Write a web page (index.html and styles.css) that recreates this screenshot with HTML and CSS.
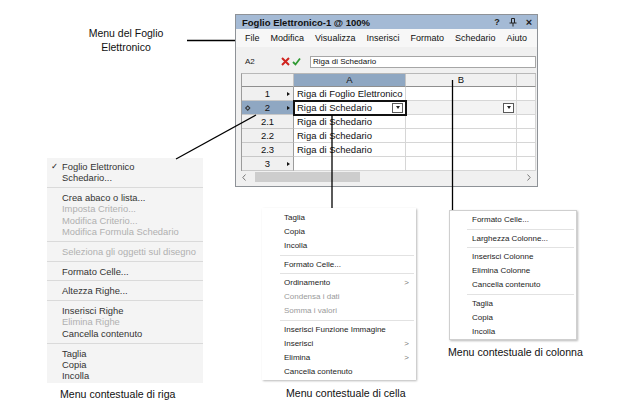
FILE: index.html
```html
<!DOCTYPE html>
<html lang="it">
<head>
<meta charset="utf-8">
<title>Foglio Elettronico</title>
<link rel="stylesheet" href="styles.css">
</head>
<body>
<div class="canvas">

  <div class="caption cap-top">Menu del Foglio<br>Elettronico</div>

  <div class="window">
    <div class="titlebar">
      <span class="title">Foglio Elettronico-1 @ 100%</span>
      <span class="tb-icons">
        <span class="tb-q">?</span>
        <svg class="tb-pin" width="8" height="9" viewBox="0 0 8 9"><path d="M2.5 0.5H5.5V5M2.5 0.5V5M0.5 5H7.5M4 5V8.5" fill="none" stroke="#222" stroke-width="1"/></svg>
        <span class="tb-x">×</span>
      </span>
    </div>
    <div class="menubar">
      <span>File</span><span>Modifica</span><span>Visualizza</span><span>Inserisci</span><span>Formato</span><span>Schedario</span><span>Aiuto</span>
    </div>
    <div class="formulabar">
      <span class="cellref">A2</span>
      <svg class="fx-cancel" width="9" height="9" viewBox="0 0 9 9"><path d="M1 1L8 8M8 1L1 8" stroke="#d0231f" stroke-width="2"/></svg>
      <svg class="fx-ok" width="9" height="9" viewBox="0 0 9 9"><path d="M1 5L3.5 7.5L8 1.5" fill="none" stroke="#2f9a33" stroke-width="1.8"/></svg>
      <div class="fx-input">Riga di Schedario</div>
    </div>

    <div class="sheet">
      <div class="hc"></div>
      <div class="hc sel">A</div>
      <div class="hc">B</div>
      <div class="hc"></div>

      <div class="rh"><span class="rm"></span><span class="rn">1</span><span class="rt"><i class="tri"></i></span></div>
      <div class="c">Riga di Foglio Elettronico</div>
      <div class="c"></div>
      <div class="c"></div>

      <div class="rh sel"><span class="rm"><i class="dia"></i></span><span class="rn">2</span><span class="rt"><i class="tri"></i></span></div>
      <div class="c active">Riga di Schedario<span class="dd"><i></i></span></div>
      <div class="c grey"><span class="dd"><i></i></span></div>
      <div class="c grey"></div>

      <div class="rh"><span class="rm"></span><span class="rn">2.1</span><span class="rt"></span></div>
      <div class="c">Riga di Schedario</div>
      <div class="c"></div>
      <div class="c"></div>

      <div class="rh"><span class="rm"></span><span class="rn">2.2</span><span class="rt"></span></div>
      <div class="c">Riga di Schedario</div>
      <div class="c"></div>
      <div class="c"></div>

      <div class="rh"><span class="rm"></span><span class="rn">2.3</span><span class="rt"></span></div>
      <div class="c">Riga di Schedario</div>
      <div class="c"></div>
      <div class="c"></div>

      <div class="rh"><span class="rm"></span><span class="rn">3</span><span class="rt"><i class="tri"></i></span></div>
      <div class="c"></div>
      <div class="c"></div>
      <div class="c"></div>
    </div>

    <div class="hscroll">
      <span class="sb-arrow"><svg width="4" height="7" viewBox="0 0 4 7"><path d="M3.5 0.5L0.8 3.5L3.5 6.5" fill="none" stroke="#777" stroke-width="1"/></svg></span>
      <span class="sb-thumb"></span>
      <span class="sb-track"></span>
      <span class="sb-arrow"><svg width="4" height="7" viewBox="0 0 4 7"><path d="M0.5 0.5L3.2 3.5L0.5 6.5" fill="none" stroke="#777" stroke-width="1"/></svg></span>
    </div>
  </div>

  <div class="menu-mac">
    <div class="item"><span class="mark">✓</span>Foglio Elettronico</div>
    <div class="item"><span class="mark"></span>Schedario...</div>
    <div class="sep"></div>
    <div class="item"><span class="mark"></span>Crea abaco o lista...</div>
    <div class="item dis"><span class="mark"></span>Imposta Criterio...</div>
    <div class="item dis"><span class="mark"></span>Modifica Criterio...</div>
    <div class="item dis"><span class="mark"></span>Modifica Formula Schedario</div>
    <div class="sep"></div>
    <div class="item dis"><span class="mark"></span>Seleziona gli oggetti sul disegno</div>
    <div class="sep"></div>
    <div class="item"><span class="mark"></span>Formato Celle...</div>
    <div class="sep"></div>
    <div class="item"><span class="mark"></span>Altezza Righe...</div>
    <div class="sep"></div>
    <div class="item"><span class="mark"></span>Inserisci Righe</div>
    <div class="item dis"><span class="mark"></span>Elimina Righe</div>
    <div class="item"><span class="mark"></span>Cancella contenuto</div>
    <div class="sep"></div>
    <div class="item"><span class="mark"></span>Taglia</div>
    <div class="item"><span class="mark"></span>Copia</div>
    <div class="item"><span class="mark"></span>Incolla</div>
  </div>

  <div class="menu-win cell-menu">
    <div class="item">Taglia</div>
    <div class="item">Copia</div>
    <div class="item">Incolla</div>
    <div class="sep"></div>
    <div class="item">Formato Celle...</div>
    <div class="sep"></div>
    <div class="item">Ordinamento<span class="sub">&gt;</span></div>
    <div class="item dis">Condensa i dati</div>
    <div class="item dis">Somma i valori</div>
    <div class="sep"></div>
    <div class="item">Inserisci Funzione Immagine</div>
    <div class="item">Inserisci<span class="sub">&gt;</span></div>
    <div class="item">Elimina<span class="sub">&gt;</span></div>
    <div class="item">Cancella contenuto</div>
  </div>

  <div class="menu-win col-menu">
    <div class="item">Formato Celle...</div>
    <div class="sep"></div>
    <div class="item">Larghezza Colonne...</div>
    <div class="sep"></div>
    <div class="item">Inserisci Colonne</div>
    <div class="item">Elimina Colonne</div>
    <div class="item">Cancella contenuto</div>
    <div class="sep"></div>
    <div class="item">Taglia</div>
    <div class="item">Copia</div>
    <div class="item">Incolla</div>
  </div>

  <div class="caption cap-row">Menu contestuale di riga</div>
  <div class="caption cap-cell">Menu contestuale di cella</div>
  <div class="caption cap-col">Menu contestuale di colonna</div>

  <svg class="callouts" width="624" height="407" viewBox="0 0 624 407">
    <line x1="187" y1="40.5" x2="235" y2="40.5"/>
    <line x1="256" y1="115" x2="176" y2="159"/>
    <line x1="332" y1="115" x2="332" y2="208"/>
    <line x1="452.5" y1="80" x2="452.5" y2="210"/>
  </svg>
</div>
</body>
</html>
```

FILE: styles.css
```css
* { box-sizing: border-box; }
html, body { margin: 0; padding: 0; background: #fff; }
body { font-family: "Liberation Sans", Arial, sans-serif; color: #111; }

.canvas { position: relative; width: 624px; height: 407px; overflow: hidden; background: #fff; }

/* captions */
.caption { position: absolute; font-size: 10.6px; color: #111; white-space: nowrap; }
.cap-top { left: 78px; top: 26px; width: 96px; text-align: center; line-height: 14px; font-size: 10.5px; }
.cap-row { left: 60px; top: 388px; }
.cap-cell { left: 286px; top: 387px; }
.cap-col { left: 448px; top: 346px; }

/* callout lines */
.callouts { position: absolute; left: 0; top: 0; pointer-events: none; z-index: 5; }
.callouts line { stroke: #000; stroke-width: 1.3; }

/* spreadsheet window */
.window {
  position: absolute; left: 235px; top: 14px; width: 303px;
  border: 1px solid #8e9297; background: #f0f0f0;
  display: flex; flex-direction: column; padding-bottom: 3px;
}
.titlebar {
  height: 14px; background: #a4bad5; display: flex; align-items: center;
  padding: 0 4px 0 6px;
}
.title { font-weight: bold; font-size: 9.5px; color: #111; }
.tb-icons { margin-left: auto; display: flex; align-items: center; gap: 8px; }
.tb-q, .tb-x { width: 8px; text-align: center; font-weight: bold; font-size: 9px; color: #222; }
.tb-x { font-size: 11px; line-height: 10px; }

.menubar {
  height: 18px; background: #f7f7f7; display: flex; align-items: center; gap: 11px;
  padding-left: 9px; font-size: 9px; color: #111;
}

.formulabar { height: 25px; display: flex; align-items: center; padding: 4px 1px 0 9px; }
.cellref { width: 36px; font-size: 8px; color: #222; }
.fx-cancel { margin-right: 2px; }
.fx-ok { margin-right: 9px; }
.fx-input {
  flex: 1; height: 12px; background: #fff; border: 1px solid #a6a6a6;
  font-size: 8px; line-height: 10px; padding-left: 2px; color: #111;
}

.sheet {
  margin: 1px 1px 0 5px;
  display: grid;
  grid-template-columns: 52px 112px 111px 1fr;
  grid-template-rows: 13px repeat(6, 14px);
  border-left: 1px solid #9c9c9c; border-top: 1px solid #b8b8b8;
  background: #fff; font-size: 9.5px;
}
.hc {
  background: #f0f0f0; border-right: 1px solid #c4c4c4; border-bottom: 1px solid #8f8f8f;
  text-align: center; line-height: 12px; color: #111;
}
.hc.sel { background: #8fa7c2; }
.rh {
  background: #f0f0f0; border-right: 1px solid #9c9c9c; border-bottom: 1px solid #c8c8c8;
  display: flex; align-items: center;
}
.rh.sel { background: #8fa7c2; }
.rm, .rt { width: 10px; display: flex; align-items: center; justify-content: center; }
.rt { justify-content: flex-start; padding-left: 4px; }
.rn { flex: 1; text-align: center; line-height: 13px; }
.tri { display: block; width: 0; height: 0; border-left: 3px solid #111; border-top: 2.5px solid transparent; border-bottom: 2.5px solid transparent; }
.dia { display: block; width: 3.5px; height: 3.5px; border: 1px solid #333; transform: rotate(45deg); margin-left: 2px; }

.c {
  border-right: 1px solid #d6d6d6; border-bottom: 1px solid #d6d6d6;
  padding: 0 2px 0 3px; line-height: 13px; white-space: nowrap; overflow: hidden;
  display: flex; align-items: center; color: #111;
}
.c.grey { background: #f3f3f3; }
.c.active { outline: 2px solid #111; outline-offset: -1px; position: relative; z-index: 1; overflow: visible; }
.dd {
  margin-left: auto; width: 11px; height: 10px; background: #fff; border: 1px solid #5a5a5a;
  display: flex; align-items: center; justify-content: center;
}
.dd i { display: block; width: 0; height: 0; border-top: 3px solid #222; border-left: 2.5px solid transparent; border-right: 2.5px solid transparent; }

.hscroll { height: 12px; margin: 0 1px; background: #f0f0f0; display: flex; align-items: center; }
.sb-arrow { width: 14px; display: flex; align-items: center; justify-content: center; }
.sb-thumb { width: 105px; height: 10px; background: #cdcdcd; margin-left: 4px; }
.sb-track { flex: 1; }

/* mac style row menu */
.menu-mac {
  position: absolute; left: 47px; top: 158px; width: 156px;
  background: #f4f4f4; padding: 3px 0 2px; font-size: 9.4px; color: #333;
}
.menu-mac .item { height: 11.3px; line-height: 11.3px; display: flex; padding-left: 4px; white-space: nowrap; }
.menu-mac .mark { width: 11px; font-family: "DejaVu Sans", sans-serif; font-size: 8.5px; color: #222; }
.menu-mac .dis { color: #b0b0b0; }
.menu-mac .sep { height: 1px; background: #dadada; margin: 3.5px 0 4px; }

/* windows style menus */
.menu-win {
  position: absolute; background: #fff; font-size: 8px; color: #1c1c1c;
  box-shadow: 1px 1px 2px rgba(0,0,0,0.28);
}
.menu-win .item { height: 14px; line-height: 14px; display: flex; padding: 0 7px 0 22px; white-space: nowrap; }
.menu-win .dis { color: #9a9a9a; }
.menu-win .sub { margin-left: auto; color: #777; }
.menu-win .sep { height: 1px; background: #e2e2e2; margin: 1.5px 2px 2px 18px; }
.cell-menu { left: 262px; top: 208px; width: 154px; padding: 3px 0 1.5px; }
.col-menu { left: 449px; top: 210px; width: 128px; border: 1px solid #cfcfcf; padding: 2px 0 0; }
.col-menu .item { padding-left: 22px; }
.col-menu .sep { margin-left: 17px; }
```
